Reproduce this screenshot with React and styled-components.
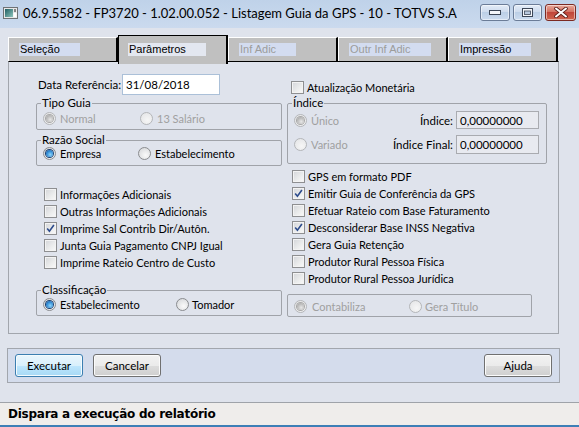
import React from "react";
import styled, { createGlobalStyle, css } from "styled-components";

const GlobalStyle = createGlobalStyle`
  html, body { margin: 0; padding: 0; }
  body {
    background: #dfe3ec;
    font-family: Lato, "Liberation Sans", sans-serif;
    font-size: 11px;
    color: #000;
  }
  * { box-sizing: border-box; }
`;

const UI_FONT = `Lato, "Liberation Sans", sans-serif`;

const Window = styled.div`
  width: 579px;
  height: 427px;
  display: flex;
  flex-direction: column;
  background: #dfe3ec;
  overflow: hidden;
`;

/* ---------- title bar ---------- */
const TitleBar = styled.div`
  height: 28px;
  flex: none;
  display: flex;
  align-items: flex-start;
  padding: 0 3px 0 3px;
  background: linear-gradient(#bfd2e9, #cbdaee);
`;

const TitleIcon = styled.svg`
  flex: none;
  margin: 7px 5px 0 0;
`;

const TitleText = styled.div`
  flex: 1;
  font: 13px ${UI_FONT};
  line-height: 14px;
  margin-top: 6px;
  white-space: nowrap;
`;

const CaptionButtons = styled.div`
  display: flex;
  gap: 3px;
  margin-top: 4px;
`;

const CaptionButton = styled.div`
  height: 17px;
  width: ${(p) => p.$w}px;
  border: 1px solid ${(p) => (p.$close ? "#7c2a22" : "#6b7c97")};
  border-radius: 3px;
  display: flex;
  align-items: center;
  justify-content: center;
  background: ${(p) =>
    p.$close
      ? "linear-gradient(#e9a99b 0%, #d37363 45%, #c0463a 50%, #d0664f 100%)"
      : "linear-gradient(#e3ecf7 0%, #cfdcee 45%, #bccfe6 50%, #cddcef 100%)"};
  box-shadow: inset 0 0 0 1px rgba(255, 255, 255, 0.5);
`;

/* ---------- body ---------- */
const Body = styled.div`
  flex: 1;
  display: flex;
  flex-direction: column;
  padding: 7px 0 0 8px;
`;

const TabStrip = styled.div`
  display: flex;
  align-items: flex-end;
  height: 26px;
  width: 551px;
`;

const Tab = styled.div`
  width: 110px;
  flex: none;
  display: flex;
  background: #c0c0c0;
  font: 11px "Liberation Sans", Arial, sans-serif;
  ${(p) =>
    p.$active
      ? css`
          height: 29px;
          margin-bottom: -3px;
          position: relative;
          z-index: 1;
          border: 1px solid #000;
          border-right-width: 2px;
          border-bottom: none;
          align-items: flex-start;
          padding: 7px 0 0 9px;
        `
      : css`
          height: 24px;
          align-items: center;
          border-top: 1px solid #fff;
          border-left: 1px solid #fff;
          border-right: 2px solid #000;
          padding-left: 10px;
        `}
`;

const TabLabel = styled.span`
  height: 13px;
  line-height: 13px;
  padding: 0 20px 0 1px;
  background: ${(p) => (p.$active ? "#e3e7f0" : "#d3dcf0")};
  color: ${(p) => (p.$disabled ? "#9c9c9c" : "#000")};
  white-space: nowrap;
`;

const Panel = styled.div`
  width: 551px;
  height: 273px;
  flex: none;
  border-top: 1px solid #000;
  border-left: 1px solid #a2a6ad;
  border-right: 1px solid #a2a6ad;
  border-bottom: 1px solid #a2a6ad;
  display: grid;
  grid-template-columns: 246px 260px;
  column-gap: 5px;
  align-items: start;
  padding-left: 27px;
`;

const Column = styled.div`
  display: flex;
  flex-direction: column;
`;

const DataRow = styled.div`
  display: flex;
  align-items: center;
  margin-top: 12px;
  padding-left: 2px;
`;

const FieldLabel = styled.span`
  width: ${(p) => p.$w}px;
  flex: none;
  white-space: nowrap;
  text-align: ${(p) => p.$align || "left"};
  font: 11.5px ${UI_FONT};
`;

const TextField = styled.div`
  width: ${(p) => p.$w}px;
  height: ${(p) => p.$h}px;
  flex: none;
  display: flex;
  align-items: center;
  padding-left: 3px;
  font: 11.5px ${UI_FONT};
  background: ${(p) => (p.$readonly ? "#e8eaf0" : "#fff")};
  border: 1px solid ${(p) => (p.$readonly ? "#a9abb0" : "#abc0d8")};
`;

const Group = styled.fieldset`
  margin: ${(p) => p.$mt || 0}px 0 0 0;
  width: ${(p) => p.$w}px;
  min-width: 0;
  border: 1px solid #a0a3a9;
  border-radius: 2px;
  padding: ${(p) => p.$pt || 0}px 7px ${(p) => p.$pb || 0}px 6px;
`;

const Legend = styled.legend`
  font: 11.5px ${UI_FONT};
  line-height: 12px;
  padding: 0 1px;
  margin-left: -2px;
  color: #000;
`;

const RadioRow = styled.div`
  display: grid;
  grid-template-columns: ${(p) => p.$cols};
  align-items: center;
  height: 14px;
`;

const OptionItem = styled.label`
  display: flex;
  align-items: center;
  gap: ${(p) => p.$gap ?? 4}px;
  height: ${(p) => p.$h || 14}px;
  white-space: nowrap;
  color: ${(p) => (p.$disabled ? "#a0a0a0" : "#000")};
  font: 11px ${UI_FONT};
`;

const RadioDot = styled.span`
  width: 13px;
  height: 13px;
  flex: none;
  border-radius: 50%;
  border: 1px solid ${(p) => (p.$disabled ? "#b4b6b9" : "#8a8c8f")};
  background: ${(p) =>
    p.$disabled
      ? "radial-gradient(circle at 60% 65%, #f6f6f6 0%, #e2e3e5 100%)"
      : "radial-gradient(circle at 60% 65%, #fafafa 0%, #d2d4d7 100%)"};
  display: flex;
  align-items: center;
  justify-content: center;
  &::after {
    content: "";
    display: ${(p) => (p.$checked ? "block" : "none")};
    width: 7px;
    height: 7px;
    border-radius: 50%;
    background: ${(p) =>
      p.$disabled
        ? "radial-gradient(circle at 60% 65%, #e8e8e8 0%, #b9b9b9 60%, #9c9c9c 100%)"
        : "radial-gradient(circle at 60% 65%, #8fd6fb 0%, #2f8ad4 55%, #104a8f 100%)"};
    box-shadow: 0 0 0 1px ${(p) => (p.$disabled ? "#a8a8a8" : "#1b3f6f")};
  }
`;

const CheckBoxSquare = styled.span`
  width: 13px;
  height: 13px;
  flex: none;
  border: 1px solid #8e8f91;
  background: linear-gradient(135deg, #d3d5d9 0%, #eceded 60%, #fafafa 100%);
  box-shadow: inset 0 0 0 1px #f3f3f3;
  display: flex;
  align-items: center;
  justify-content: center;
`;

const CheckList = styled.div`
  display: flex;
  flex-direction: column;
  margin-top: ${(p) => p.$mt}px;
  padding-left: ${(p) => p.$pl}px;
`;

const IndexGrid = styled.div`
  display: grid;
  grid-template-columns: auto 1fr 83px;
  grid-template-rows: 18px 18px;
  row-gap: 6px;
  column-gap: 3px;
  align-items: center;
`;

/* ---------- buttons ---------- */
const ButtonBar = styled.div`
  margin-top: 14px;
  width: 553px;
  margin-left: -1px;
  height: 35px;
  flex: none;
  display: flex;
  align-items: center;
  gap: 10px;
  padding: 0 7px 0 7px;
  background: #d4dcec;
  border: 1px solid #a2a6ad;
`;

const Button = styled.button`
  width: 68px;
  height: 23px;
  padding: 0;
  margin-left: ${(p) => (p.$push ? "auto" : "0")};
  font: 11.5px ${UI_FONT};
  color: #000;
  border-radius: 3px;
  border: 1px solid #707070;
  background: linear-gradient(#f2f2f2 0%, #ebebeb 50%, #dddddd 51%, #cfcfcf 100%);
  box-shadow: inset 0 0 0 1px #fbfbfb;
  ${(p) =>
    p.$focused &&
    css`
      border-color: #3c7fb1;
      background: linear-gradient(#eaf6fd 0%, #d9f0fc 50%, #bee6fd 51%, #a7d9f5 100%);
      box-shadow: inset 0 0 0 1px #f4fbfe;
    `}
`;

const StatusBar = styled.div`
  height: 25px;
  flex: none;
  display: flex;
  align-items: center;
  padding: 0 0 1px 8px;
  background: #efedeb;
  border-top: 1px solid #9fa3a9;
  border-bottom: 2px solid #3d7fb6;
  font: bold 12px "DejaVu Sans", Verdana, sans-serif;
  letter-spacing: -0.25px;
`;

/* ---------- small pieces ---------- */
function Radio({ label, checked, disabled, gap }) {
  return (
    <OptionItem $disabled={disabled} $gap={gap}>
      <RadioDot $checked={checked} $disabled={disabled} />
      {label}
    </OptionItem>
  );
}

function CheckBox({ label, checked }) {
  return (
    <OptionItem $h={17} $gap={3}>
      <CheckBoxSquare>
        {checked && (
          <svg width="9" height="9" viewBox="0 0 9 9">
            <path d="M1.2 4.6 L3.4 7.3 L7.9 1" fill="none" stroke="#2c4b8c" strokeWidth="1.6" />
          </svg>
        )}
      </CheckBoxSquare>
      {label}
    </OptionItem>
  );
}

const tabs = [
  { label: "Seleção" },
  { label: "Parâmetros", active: true },
  { label: "Inf Adic", disabled: true },
  { label: "Outr Inf Adic", disabled: true },
  { label: "Impressão" },
];

const leftChecks = [
  { label: "Informações Adicionais" },
  { label: "Outras Informações Adicionais" },
  { label: "Imprime Sal Contrib Dir/Autôn.", checked: true },
  { label: "Junta Guia Pagamento CNPJ Igual" },
  { label: "Imprime Rateio Centro de Custo" },
];

const rightChecks = [
  { label: "GPS em formato PDF" },
  { label: "Emitir Guia de Conferência da GPS", checked: true },
  { label: "Efetuar Rateio com Base Faturamento" },
  { label: "Desconsiderar Base INSS Negativa", checked: true },
  { label: "Gera Guia Retenção" },
  { label: "Produtor Rural Pessoa Física" },
  { label: "Produtor Rural Pessoa Jurídica" },
];

export default function App() {
  return (
    <>
      <GlobalStyle />
      <Window>
        <TitleBar>
          <TitleIcon width="15" height="12" viewBox="0 0 15 12">
            <defs>
              <linearGradient id="appg" x1="0" y1="0" x2="1" y2="1">
                <stop offset="0" stopColor="#1f5d62" />
                <stop offset="1" stopColor="#8fc6bd" />
              </linearGradient>
            </defs>
            <rect x="0.5" y="0.5" width="14" height="11" fill="#e8e8e8" stroke="#6f7275" />
            <rect x="2" y="2" width="8" height="8" fill="url(#appg)" />
            <rect x="10.5" y="6" width="3" height="4" fill="#ffffff" />
            <rect x="11.5" y="2" width="1" height="3" fill="#222" />
          </TitleIcon>
          <TitleText>06.9.5582 - FP3720 - 1.02.00.052 - Listagem Guia da GPS - 10 - TOTVS S.A</TitleText>
          <CaptionButtons>
            <CaptionButton $w={30}>
              <svg width="12" height="6" viewBox="0 0 12 6">
                <rect x="0.5" y="0.5" width="11" height="4" fill="#f4f6fa" stroke="#3c4656" />
              </svg>
            </CaptionButton>
            <CaptionButton $w={29}>
              <svg width="11" height="9" viewBox="0 0 11 9">
                <rect x="0.5" y="0.5" width="10" height="8" fill="#f4f6fa" stroke="#3c4656" />
                <rect x="2.5" y="3" width="6" height="3.5" fill="#b9c9de" stroke="#3c4656" strokeWidth="0.8" />
              </svg>
            </CaptionButton>
            <CaptionButton $w={31} $close>
              <svg width="14" height="11" viewBox="0 0 14 11">
                <path d="M2 1.5 L12 9.5 M12 1.5 L2 9.5" stroke="#5a1d17" strokeWidth="3.6" strokeLinecap="round" />
                <path d="M2 1.5 L12 9.5 M12 1.5 L2 9.5" stroke="#ffffff" strokeWidth="2" strokeLinecap="round" />
              </svg>
            </CaptionButton>
          </CaptionButtons>
        </TitleBar>

        <Body>
          <TabStrip>
            {tabs.map((t) => (
              <Tab key={t.label} $active={t.active}>
                <TabLabel $active={t.active} $disabled={t.disabled}>
                  {t.label}
                </TabLabel>
              </Tab>
            ))}
          </TabStrip>

          <Panel>
            <Column>
              <DataRow>
                <FieldLabel $w={84}>Data Referência:</FieldLabel>
                <TextField $w={98} $h={21}>31/08/2018</TextField>
              </DataRow>

              <Group $w={246} $mt={2} $pt={2} $pb={4}>
                <Legend>Tipo Guia</Legend>
                <RadioRow $cols="97px 1fr">
                  <Radio label="Normal" checked disabled />
                  <Radio label="13 Salário" disabled />
                </RadioRow>
              </Group>

              <Group $w={246} $mt={4} $pt={0} $pb={5}>
                <Legend>Razão Social</Legend>
                <RadioRow $cols="95px 1fr">
                  <Radio label="Empresa" checked />
                  <Radio label="Estabelecimento" />
                </RadioRow>
              </Group>

              <CheckList $mt={20} $pl={8}>
                {leftChecks.map((c) => (
                  <CheckBox key={c.label} label={c.label} checked={c.checked} />
                ))}
              </CheckList>

              <Group $w={246} $mt={13} $pt={1} $pb={4}>
                <Legend>Classificação</Legend>
                <RadioRow $cols="133px 1fr">
                  <Radio label="Estabelecimento" checked />
                  <Radio label="Tomador" gap={3} />
                </RadioRow>
              </Group>
            </Column>

            <Column>
              <CheckList $mt={17} $pl={4}>
                <CheckBox label="Atualização Monetária" />
              </CheckList>

              <Group $w={260} $mt={1} $pt={2} $pb={10}>
                <Legend>Índice</Legend>
                <IndexGrid>
                  <Radio label="Único" checked disabled />
                  <FieldLabel $align="right">Índice:</FieldLabel>
                  <TextField $w={83} $h={18} $readonly>0,00000000</TextField>
                  <Radio label="Variado" disabled />
                  <FieldLabel $align="right">Índice Final:</FieldLabel>
                  <TextField $w={83} $h={19} $readonly>0,00000000</TextField>
                </IndexGrid>
              </Group>

              <CheckList $mt={4} $pl={5}>
                {rightChecks.map((c) => (
                  <CheckBox key={c.label} label={c.label} checked={c.checked} />
                ))}
              </CheckList>

              <Group $w={245} $mt={7} $pt={4} $pb={3}>
                <RadioRow $cols="115px 1fr">
                  <Radio label="Contabiliza" checked disabled gap={5} />
                  <Radio label="Gera Título" disabled gap={3} />
                </RadioRow>
              </Group>
            </Column>
          </Panel>

          <ButtonBar>
            <Button $focused>Executar</Button>
            <Button>Cancelar</Button>
            <Button $push>Ajuda</Button>
          </ButtonBar>
        </Body>

        <StatusBar>Dispara a execução do relatório</StatusBar>
      </Window>
    </>
  );
}
